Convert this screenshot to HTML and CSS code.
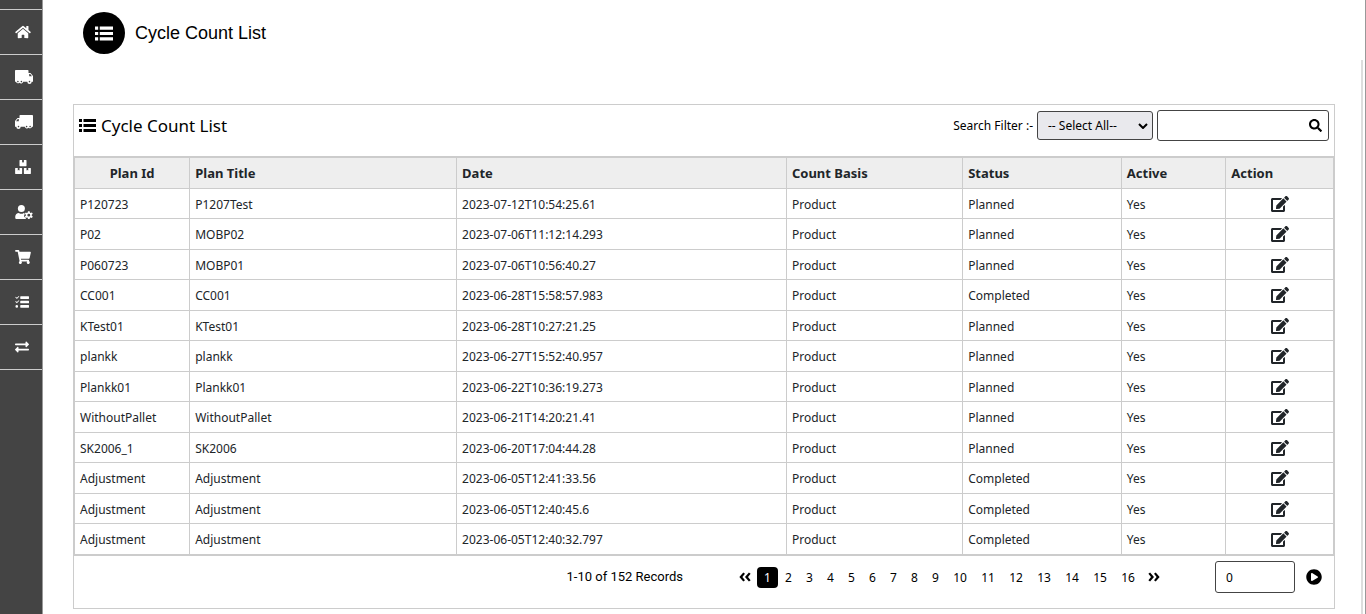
FILE: index.html
```html
<!DOCTYPE html>
<html lang="en">
<head>
<meta charset="utf-8">
<meta name="viewport" content="width=device-width, initial-scale=1">
<title>Cycle Count List</title>
<link rel="stylesheet" href="styles.css">
</head>
<body>
<svg class="sprite" aria-hidden="true">
  <symbol id="i-list" viewBox="0 0 17 13"><path d="M0 0h3v3H0zM0 5h3v3H0zM0 10h3v3H0zM4.500 0H17v3H4.500zM4.500 5H17v3H4.500zM4.500 10H17v3H4.500z"/></symbol>
  <symbol id="i-home" viewBox="0 0 576 512"><path d="M280.37 148.26L96 300.11V464a16 16 0 0 0 16 16l112.06-.29a16 16 0 0 0 15.92-16V368a16 16 0 0 1 16-16h64a16 16 0 0 1 16 16v95.64a16 16 0 0 0 16 16.05L464 480a16 16 0 0 0 16-16V300L295.67 148.26a12.19 12.19 0 0 0-15.3 0zM571.6 251.47L488 182.56V44.05a12 12 0 0 0-12-12h-56a12 12 0 0 0-12 12v72.61L318.47 43a48 48 0 0 0-61 0L4.34 251.47a12 12 0 0 0-1.6 16.9l25.5 31A12 12 0 0 0 45.15 301l235.22-193.74a12.19 12.19 0 0 1 15.3 0L530.9 301a12 12 0 0 0 16.9-1.6l25.5-31a12 12 0 0 0-1.7-16.93z"/></symbol>
  <symbol id="i-truck" viewBox="0 0 18 14"><path fill-rule="evenodd" d="M.8 0h11.900q.8 0 .8.8V3h2l2.500 3v5.800h-1.300a2.200 2.200 0 0 1-4.400 0H8.200a2.200 2.200 0 0 1-3.700 1 2.200 2.200 0 0 1-3.500-1H0V.8Q0 0 .8 0zM14.200 4v2.200H17L15.200 4zM2.900 10.800a.8.8 0 1 0 0 1.600.8.8 0 0 0 0-1.600zM6.400 10.800a.8.8 0 1 0 0 1.600.8.8 0 0 0 0-1.600zM14.500 10.800a.8.8 0 1 0 0 1.600.8.8 0 0 0 0-1.600z"/></symbol>
  <symbol id="i-boxes" viewBox="0 0 576 512"><path d="M560 288h-80v96l-32-21.300-32 21.300v-96h-80c-8.800 0-16 7.200-16 16v192c0 8.800 7.200 16 16 16h224c8.800 0 16-7.200 16-16V304c0-8.800-7.200-16-16-16zm-384-64h224c8.800 0 16-7.200 16-16V16c0-8.800-7.200-16-16-16h-80v96l-32-21.300L256 96V0h-80c-8.800 0-16 7.200-16 16v192c0 8.800 7.200 16 16 16zm64 64h-80v96l-32-21.300L96 384v-96H16c-8.800 0-16 7.200-16 16v192c0 8.800 7.200 16 16 16h224c8.800 0 16-7.200 16-16V304c0-8.800-7.200-16-16-16z"/></symbol>
  <symbol id="i-user" viewBox="0 0 640 512"><circle cx="224" cy="128" r="128"/><path d="M313.600 288c-56 43-123 43-179.200 0C60 288 0 348 0 422.400V464c0 26.500 21.500 48 48 48h344l-12-40-52-40-4-48 20-48-10-44z"/><path fill-rule="evenodd" d="M465 224h62l10 50 24 14 49-17 30 52-38 34v28l38 34-30 52-49-17-24 14-10 44h-62l-10-44-24-14-49 17-30-52 38-34v-28l-38-34 30-52 49 17 24-14zM496 318a53 53 0 1 0 0 106 53 53 0 0 0 0-106z"/></symbol>
  <symbol id="i-cart" viewBox="0 0 576 512"><path d="M528.120 301.319l47.273-208C578.806 78.301 567.391 64 551.990 64H159.208l-9.166-44.810C147.758 8.021 137.930 0 126.529 0H24C10.745 0 0 10.745 0 24v16c0 13.255 10.745 24 24 24h69.883l70.248 343.435C147.325 417.100 136 435.222 136 456c0 30.928 25.072 56 56 56s56-25.072 56-56c0-15.674-6.447-29.835-16.824-40h209.647C430.447 426.165 424 440.326 424 456c0 30.928 25.072 56 56 56s56-25.072 56-56c0-22.172-12.888-41.332-31.579-50.405l5.517-24.276c3.413-15.018-8.002-29.319-23.403-29.319H218.117l-6.545-32h293.145c11.206 0 20.920-7.754 23.403-18.681z"/></symbol>
  <symbol id="i-tasks" viewBox="0 0 512 512"><path d="M140 35l18 18-82 82q-8 6-16 0L8 84l24-24 36 36zM140 195l18 18-82 82q-8 6-16 0L8 244l24-24 36 36zM64 368a48 48 0 1 0 0 96 48 48 0 0 0 0-96zM208 50h288q16 0 16 16v62q0 16-16 16H208q-16 0-16-16V66q0-16 16-16zM208 210h288q16 0 16 16v62q0 16-16 16H208q-16 0-16-16v-62q0-16 16-16zM208 370h288q16 0 16 16v62q0 16-16 16H208q-16 0-16-16v-62q0-16 16-16z"/></symbol>
  <symbol id="i-swap" viewBox="0 0 512 512"><path d="M0 168v-16c0-13.255 10.745-24 24-24h360V80c0-21.367 25.899-32.042 40.971-16.971l80 80c9.372 9.373 9.372 24.569 0 33.941l-80 80C409.956 271.982 384 261.456 384 240v-48H24c-13.255 0-24-10.745-24-24zm488 152H128v-48c0-21.314-25.862-32.080-40.971-16.971l-80 80c-9.372 9.373-9.372 24.569 0 33.941l80 80C102.057 463.997 128 453.437 128 432v-48h360c13.255 0 24-10.745 24-24v-16c0-13.255-10.745-24-24-24z"/></symbol>
  <symbol id="i-search" viewBox="0 0 512 512"><path d="M505 442.700L405.300 343c-4.500-4.500-10.600-7-17-7H372c27.600-35.300 44-79.700 44-128C416 93.100 322.900 0 208 0S0 93.100 0 208s93.100 208 208 208c48.300 0 92.700-16.400 128-44v16.300c0 6.400 2.500 12.500 7 17l99.700 99.700c9.400 9.400 24.600 9.400 33.900 0l28.300-28.300c9.400-9.400 9.400-24.600.100-34zM208 336c-70.700 0-128-57.200-128-128 0-70.700 57.200-128 128-128 70.700 0 128 57.200 128 128 0 70.700-57.200 128-128 128z"/></symbol>
  <symbol id="i-edit" viewBox="0 0 576 512"><path d="M402.600 83.200l90.200 90.200c3.800 3.800 3.800 10 0 13.800L274.400 405.600l-92.800 10.300c-12.400 1.400-22.900-9.100-21.500-21.500l10.300-92.800L388.800 83.200c3.800-3.800 10-3.800 13.800 0zm162-22.900l-48.800-48.800c-15.200-15.200-39.900-15.200-55.200 0l-35.400 35.400c-3.800 3.800-3.800 10 0 13.800l90.200 90.200c3.800 3.800 10 3.800 13.800 0l35.400-35.400c15.200-15.300 15.200-40 0-55.200zM384 346.200V448H64V128h229.800c3.200 0 6.200-1.300 8.500-3.500l40-40c7.600-7.600 2.200-20.500-8.500-20.500H48C21.500 64 0 85.500 0 112v352c0 26.500 21.500 48 48 48h352c26.500 0 48-21.500 48-48V306.200c0-10.700-12.900-16-20.500-8.500l-40 40c-2.200 2.300-3.500 5.300-3.500 8.500z"/></symbol>
  <symbol id="i-double" viewBox="0 0 448 512"><path d="M224 256L370 86l64 50-98 120 98 120-64 50zM14 256L160 86l64 50-98 120 98 120-64 50z"/></symbol>
  <symbol id="i-play" viewBox="0 0 512 512"><path d="M256 8C119 8 8 119 8 256s111 248 248 248 248-111 248-248S393 8 256 8zm115.700 272l-176 101c-15.800 8.800-35.700-2.500-35.700-21V152c0-18.400 19.800-29.800 35.700-21l176 107c16.400 9.200 16.400 32.900 0 42z"/></symbol>
</svg>
<div class="app">
  <nav class="sidebar" aria-label="Main">
    <div class="sidebar-top"></div>
    <a class="nav-item" href="#home" aria-label="Home"><svg class="nav-icon"><use href="#i-home"/></svg></a>
    <a class="nav-item" href="#inbound" aria-label="Inbound"><svg class="nav-icon wide"><use href="#i-truck"/></svg></a>
    <a class="nav-item" href="#outbound" aria-label="Outbound"><svg class="nav-icon wide flip"><use href="#i-truck"/></svg></a>
    <a class="nav-item" href="#stock" aria-label="Stock"><svg class="nav-icon"><use href="#i-boxes"/></svg></a>
    <a class="nav-item" href="#users" aria-label="Users"><svg class="nav-icon wide"><use href="#i-user"/></svg></a>
    <a class="nav-item" href="#orders" aria-label="Orders"><svg class="nav-icon"><use href="#i-cart"/></svg></a>
    <a class="nav-item" href="#counts" aria-label="Counts"><svg class="nav-icon small"><use href="#i-tasks"/></svg></a>
    <a class="nav-item" href="#transfers" aria-label="Transfers"><svg class="nav-icon small"><use href="#i-swap"/></svg></a>
  </nav>
  <main class="main">
    <header class="page-head">
      <span class="badge"><svg class="badge-icon"><use href="#i-list"/></svg></span>
      <h1 class="page-title">Cycle Count List</h1>
    </header>
    <section class="panel">
      <div class="toolbar">
        <h2 class="panel-title"><svg class="panel-icon"><use href="#i-list"/></svg>Cycle Count List</h2>
        <form class="search">
          <label class="search-label" for="filter">Search Filter :-</label>
          <span class="select-wrap">
            <select class="select" id="filter"><option>-- Select All--</option></select>
            <svg class="chevron" viewBox="0 0 10 6"><path d="M1 1l4 4 4-4"/></svg>
          </span>
          <span class="search-box">
            <input class="search-input" type="text" aria-label="Search">
            <button class="icon-button" type="button" aria-label="Search"><svg class="search-icon"><use href="#i-search"/></svg></button>
          </span>
        </form>
      </div>
      <div class="table-wrap">
        <table class="table">
          <colgroup><col class="c-id"><col class="c-title"><col class="c-date"><col class="c-basis"><col class="c-status"><col class="c-active"><col></colgroup>
          <thead><tr><th class="center">Plan Id</th><th>Plan Title</th><th>Date</th><th>Count Basis</th><th>Status</th><th>Active</th><th>Action</th></tr></thead>
          <tbody>
            <tr><td>P120723</td><td>P1207Test</td><td>2023-07-12T10:54:25.61</td><td>Product</td><td>Planned</td><td>Yes</td><td class="action"><a class="edit" href="#edit" aria-label="Edit"><svg class="edit-icon"><use href="#i-edit"/></svg></a></td></tr>
            <tr><td>P02</td><td>MOBP02</td><td>2023-07-06T11:12:14.293</td><td>Product</td><td>Planned</td><td>Yes</td><td class="action"><a class="edit" href="#edit" aria-label="Edit"><svg class="edit-icon"><use href="#i-edit"/></svg></a></td></tr>
            <tr><td>P060723</td><td>MOBP01</td><td>2023-07-06T10:56:40.27</td><td>Product</td><td>Planned</td><td>Yes</td><td class="action"><a class="edit" href="#edit" aria-label="Edit"><svg class="edit-icon"><use href="#i-edit"/></svg></a></td></tr>
            <tr><td>CC001</td><td>CC001</td><td>2023-06-28T15:58:57.983</td><td>Product</td><td>Completed</td><td>Yes</td><td class="action"><a class="edit" href="#edit" aria-label="Edit"><svg class="edit-icon"><use href="#i-edit"/></svg></a></td></tr>
            <tr><td>KTest01</td><td>KTest01</td><td>2023-06-28T10:27:21.25</td><td>Product</td><td>Planned</td><td>Yes</td><td class="action"><a class="edit" href="#edit" aria-label="Edit"><svg class="edit-icon"><use href="#i-edit"/></svg></a></td></tr>
            <tr><td>plankk</td><td>plankk</td><td>2023-06-27T15:52:40.957</td><td>Product</td><td>Planned</td><td>Yes</td><td class="action"><a class="edit" href="#edit" aria-label="Edit"><svg class="edit-icon"><use href="#i-edit"/></svg></a></td></tr>
            <tr><td>Plankk01</td><td>Plankk01</td><td>2023-06-22T10:36:19.273</td><td>Product</td><td>Planned</td><td>Yes</td><td class="action"><a class="edit" href="#edit" aria-label="Edit"><svg class="edit-icon"><use href="#i-edit"/></svg></a></td></tr>
            <tr><td>WithoutPallet</td><td>WithoutPallet</td><td>2023-06-21T14:20:21.41</td><td>Product</td><td>Planned</td><td>Yes</td><td class="action"><a class="edit" href="#edit" aria-label="Edit"><svg class="edit-icon"><use href="#i-edit"/></svg></a></td></tr>
            <tr><td>SK2006_1</td><td>SK2006</td><td>2023-06-20T17:04:44.28</td><td>Product</td><td>Planned</td><td>Yes</td><td class="action"><a class="edit" href="#edit" aria-label="Edit"><svg class="edit-icon"><use href="#i-edit"/></svg></a></td></tr>
            <tr><td>Adjustment</td><td>Adjustment</td><td>2023-06-05T12:41:33.56</td><td>Product</td><td>Completed</td><td>Yes</td><td class="action"><a class="edit" href="#edit" aria-label="Edit"><svg class="edit-icon"><use href="#i-edit"/></svg></a></td></tr>
            <tr><td>Adjustment</td><td>Adjustment</td><td>2023-06-05T12:40:45.6</td><td>Product</td><td>Completed</td><td>Yes</td><td class="action"><a class="edit" href="#edit" aria-label="Edit"><svg class="edit-icon"><use href="#i-edit"/></svg></a></td></tr>
            <tr><td>Adjustment</td><td>Adjustment</td><td>2023-06-05T12:40:32.797</td><td>Product</td><td>Completed</td><td>Yes</td><td class="action"><a class="edit" href="#edit" aria-label="Edit"><svg class="edit-icon"><use href="#i-edit"/></svg></a></td></tr>
          </tbody>
        </table>
      </div>
      <footer class="pager">
        <span class="records">1-10 of 152 Records</span>
        <nav class="pages" aria-label="Pages">
          <a class="page arrow" href="#prev" aria-label="Previous"><svg class="arrow-icon"><use href="#i-double"/></svg></a>
          <a class="page current" href="#1" aria-current="page">1</a>
          <a class="page" href="#2">2</a>
          <a class="page" href="#3">3</a>
          <a class="page" href="#4">4</a>
          <a class="page" href="#5">5</a>
          <a class="page" href="#6">6</a>
          <a class="page" href="#7">7</a>
          <a class="page" href="#8">8</a>
          <a class="page" href="#9">9</a>
          <a class="page two" href="#10">10</a>
          <a class="page two" href="#11">11</a>
          <a class="page two" href="#12">12</a>
          <a class="page two" href="#13">13</a>
          <a class="page two" href="#14">14</a>
          <a class="page two" href="#15">15</a>
          <a class="page two" href="#16">16</a>
          <a class="page arrow" href="#next" aria-label="Next"><svg class="arrow-icon flip"><use href="#i-double"/></svg></a>
        </nav>
        <form class="jump">
          <input class="jump-input" type="text" value="0" aria-label="Go to page">
          <button class="icon-button" type="button" aria-label="Go"><svg class="play-icon"><use href="#i-play"/></svg></button>
        </form>
      </footer>
    </section>
  </main>
  <div class="gutter"><div class="scroll-thumb"></div></div>
</div>
</body>
</html>
```
FILE: styles.css
```css
* { box-sizing: border-box; }
body {
  margin: 0;
  background: #fff;
  color: #212529;
  font: 12px/18px "Segoe UI", "Noto Sans", sans-serif;
}
svg { display: block; fill: currentColor; }
a { color: inherit; text-decoration: none; }
.sprite { display: none; }
.flip { transform: scaleX(-1); }
.app { display: flex; min-height: 100vh; }

.sidebar {
  flex: none;
  width: 43px;
  background: #444;
  border-right: 1px solid #999;
}
.sidebar-top { height: 10px; border-bottom: 1px solid #ccc; }
.nav-item {
  display: flex;
  align-items: center;
  height: 45px;
  padding: 0 0 1px 15px;
  border-bottom: 1px solid #ccc;
  color: #fff;
}
.nav-icon { width: 16px; height: 14px; }
.nav-icon.wide { width: 18px; }
.nav-icon.small { width: 14px; }

.main { flex: 1; min-width: 0; padding: 12px 26px 5px 30px; }
.page-head { display: flex; align-items: center; gap: 10px; margin-bottom: 50px; padding-left: 10px; }
.badge {
  display: grid;
  place-items: center;
  width: 42px;
  height: 42px;
  border-radius: 50%;
  background: #000;
  color: #fff;
}
.badge-icon { width: 18px; height: 15px; }
.page-title { margin: 0; color: #000; font: 18px/24px "Liberation Sans", Arial, sans-serif; }

.panel { border: 1px solid #ccc; color: #000; }
.toolbar { display: flex; align-items: center; justify-content: space-between; height: 51px; padding: 0 5px 10px; }
.panel-title { display: flex; align-items: center; gap: 5px; margin: 0; font-size: 17px; font-weight: 400; line-height: 24px; }
.panel-icon { width: 17px; height: 13px; }
.search { display: flex; align-items: center; gap: 4px; }
.select-wrap, .search-box { position: relative; display: block; }
.select, .search-input, .jump-input {
  border: 1px solid #444;
  border-radius: 3px;
  background: #fff;
  color: #000;
  font: inherit;
}
.select { display: block; width: 116px; height: 29px; padding: 0 10px; background: #e9e9ed; appearance: none; }
.chevron { position: absolute; right: 5px; top: 12px; width: 10px; height: 6px; fill: none; stroke: #000; stroke-width: 2; pointer-events: none; }
.search-input { display: block; width: 172px; height: 31px; padding: 0 30px 0 8px; }
.icon-button { padding: 0; border: 0; background: none; color: #000; cursor: pointer; }
.search-box .icon-button { position: absolute; top: 9px; right: 7px; }
.search-icon { width: 13px; height: 13px; }

.table-wrap { border-top: 1px solid #ccc; border-bottom: 1px solid #ccc; }
.table { width: 100%; border-collapse: collapse; table-layout: fixed; color: #212529; }
.c-id { width: 9.15%; }
.c-title { width: 21.2%; }
.c-date { width: 26.2%; }
.c-basis { width: 14%; }
.c-status { width: 12.6%; }
.c-active { width: 8.3%; }
.table th, .table td { height: 30px; padding: 0 5px; border: 1px solid #ccc; text-align: left; }
.table td { padding-top: 2px; }
.table td.action { padding-top: 0; }
.table th { height: 31px; background: #eee; font-size: 13px; font-weight: 700; }
.table tr:nth-child(even) td { height: 31px; }
.table th.center { text-align: center; }
.edit { display: flex; justify-content: center; }
.edit-icon { width: 18px; height: 16px; }

.pager { display: flex; align-items: center; justify-content: flex-end; height: 52px; padding: 0 12px 10px 5px; }
.records { margin-right: 50px; font: 13px/18px Roboto, sans-serif; }
.pages { display: flex; align-items: center; margin-right: 49px; }
.page { min-width: 21px; height: 21px; border-radius: 4px; line-height: 21px; text-align: center; }
.page.two { min-width: 28px; }
.page.current { background: #000; color: #fff; }
.page.arrow { display: grid; place-items: center; min-width: 24px; }
.arrow-icon { width: 12px; height: 14px; }
.jump { display: flex; align-items: center; gap: 11px; }
.jump-input { width: 80px; height: 32px; padding: 0 10px; }
.play-icon { width: 16px; height: 16px; }

.gutter { flex: none; display: flex; width: 5px; padding-top: 60px; border-right: 1px solid #999; }
.scroll-thumb { width: 2px; background: #ddd; }
```
